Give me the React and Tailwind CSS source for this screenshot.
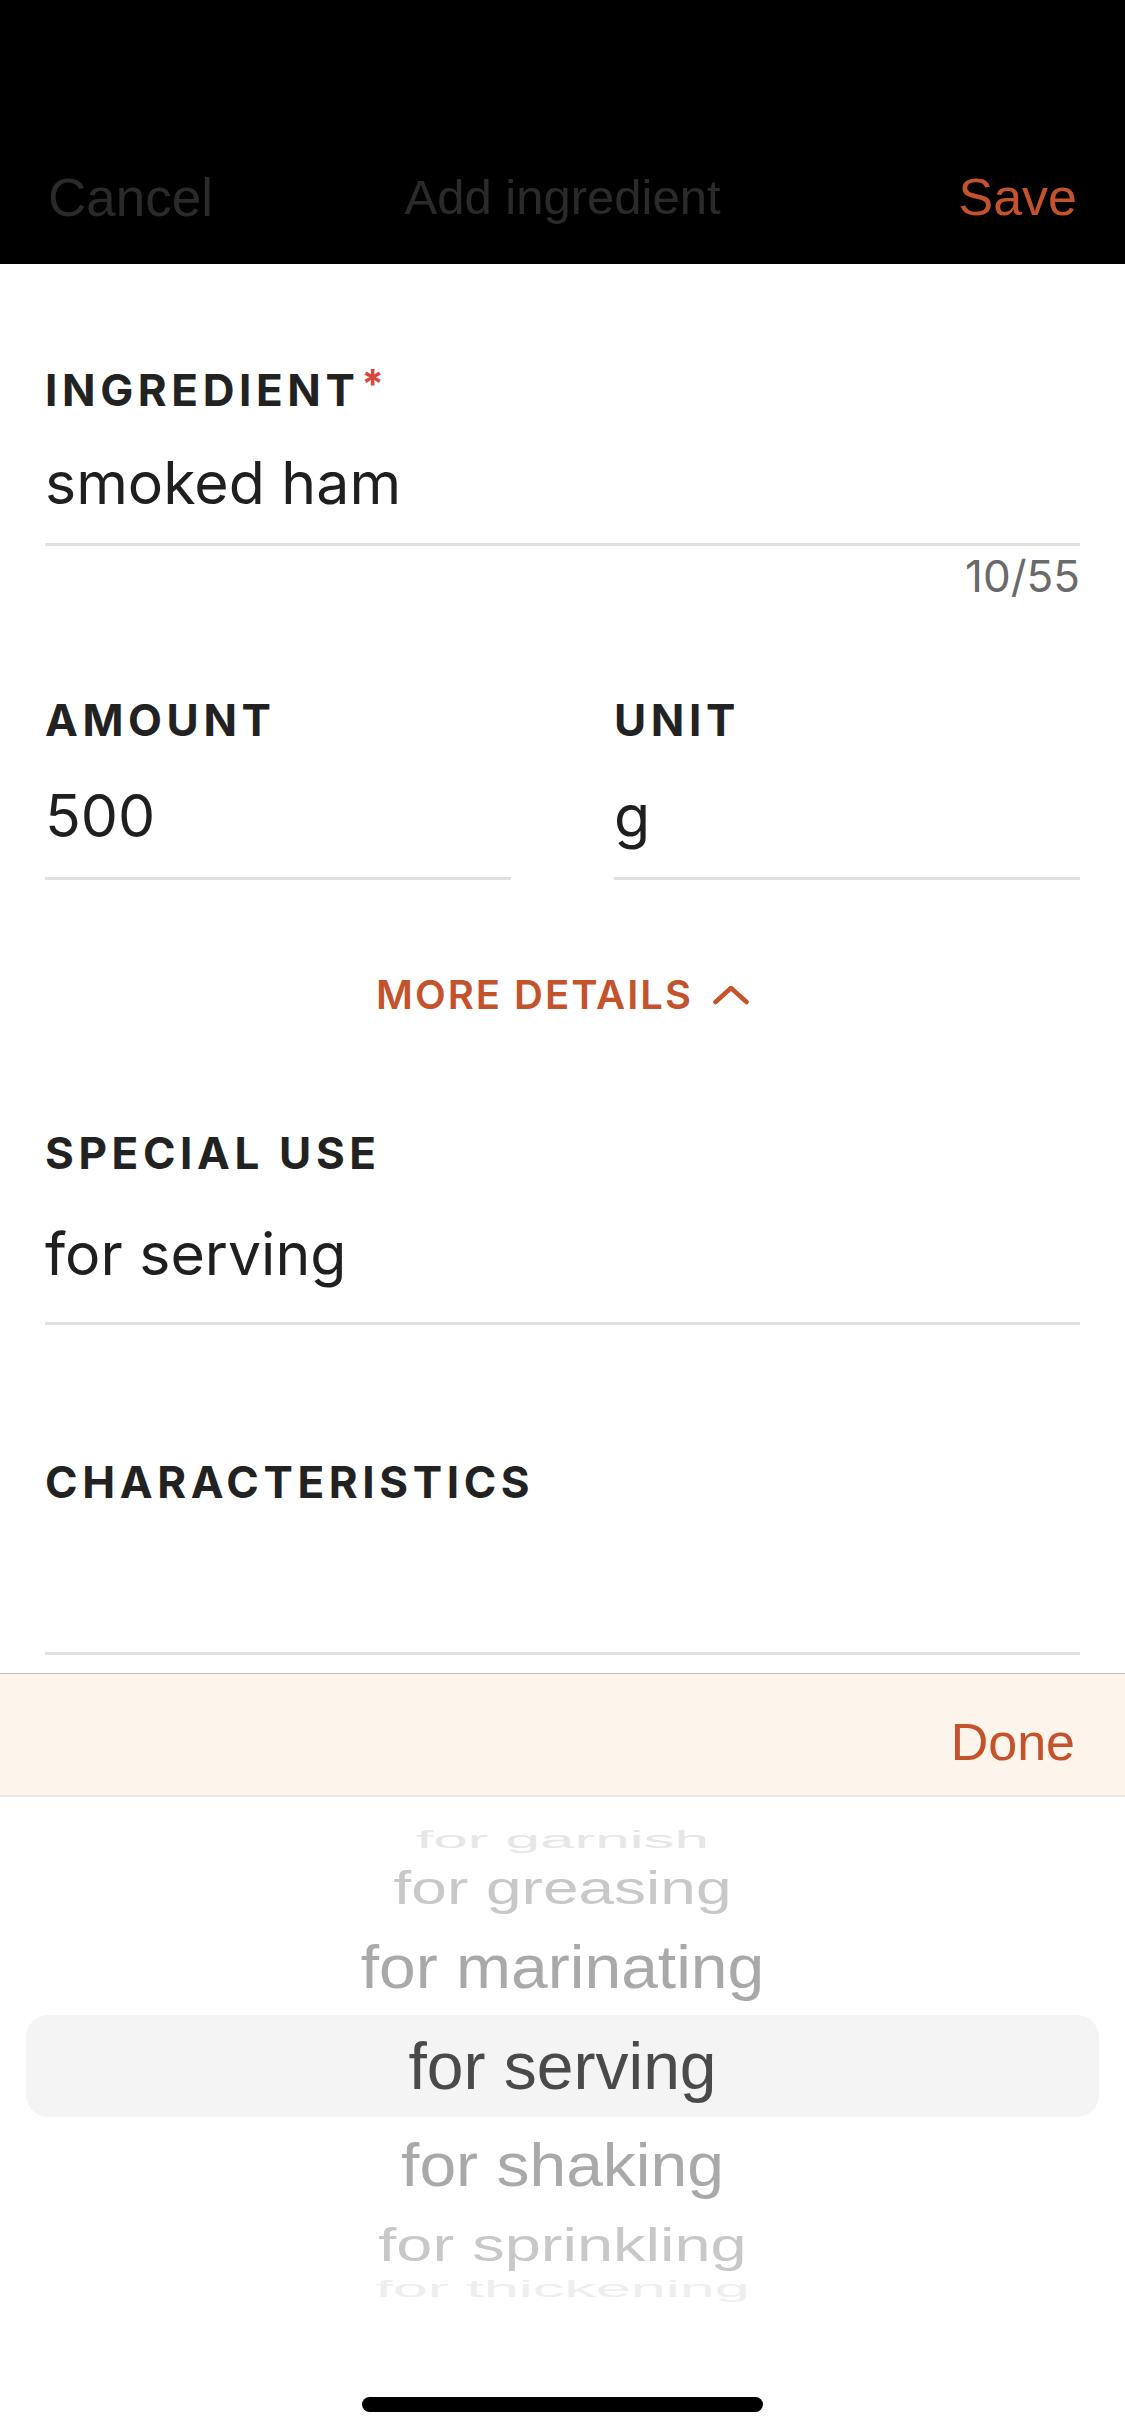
const sans = "font-['Inter',sans-serif]";
const ios = "font-['Liberation_Sans',Arial,sans-serif]";

function Label({ children, className = "" }) {
  return (
    <div
      className={`${sans} text-[44px] leading-none font-bold tracking-[0.105em] text-[#222222] ${className}`}>
      {children}
    </div>
  );
}

function Value({ children, className = "" }) {
  return (
    <div
      className={`${sans} text-[59px] leading-none text-[#1f1f1f] h-[60px] ${className}`}>
      {children}
    </div>
  );
}

function Line({ className = "" }) {
  return <div className={`h-[3px] bg-[#e0e0dd] ${className}`} />;
}

const wheel = [
  { text: "for garnish", h: "h-[34px]", cls: "text-[62px] text-[#e6e6e6] scale-y-[0.4]" },
  { text: "for greasing", h: "h-[62px]", cls: "text-[64px] text-[#c8c8c8] scale-y-[0.72]" },
  { text: "for marinating", h: "h-[96px]", cls: "text-[66px] text-[#a9a9a9] scale-y-[0.92]" },
  { text: "for serving", h: "h-[102px]", cls: "text-[66px] text-[#4a4a4a]", active: true },
  { text: "for shaking", h: "h-[96px]", cls: "text-[66px] text-[#a9a9a9] scale-y-[0.92]" },
  { text: "for sprinkling", h: "h-[62px]", cls: "text-[65px] text-[#c8c8c8] scale-y-[0.72]" },
  { text: "for thickening", h: "h-[26px]", cls: "text-[63px] text-[#eeeeee] scale-y-[0.38]" },
];

export default function App() {
  return (
    <div className="w-[1125px] h-[2436px] bg-white flex flex-col overflow-hidden">
      {/* Nav bar */}
      <header
        className={`${ios} h-[264px] shrink-0 bg-black grid grid-cols-[1fr_auto_1fr] items-start pt-[171px] px-[48px]`}>
        <span className="text-[53px] leading-none text-[#2a2a2a]">Cancel</span>
        <span className="text-[49px] leading-none text-[#2a2a2a] mt-[2px]">
          Add ingredient
        </span>
        <span className="text-[52px] leading-none text-[#c4522b] justify-self-end">
          Save
        </span>
      </header>

      {/* Form */}
      <div className="h-[1409px] shrink-0 overflow-hidden px-[45px] flex flex-col">
        <Label className="mt-[104px] flex">
          INGREDIENT
          <span className="text-[#d9473c] text-[40px] ml-[2px] -mt-[4px]">*</span>
        </Label>
        <Value className="mt-[41px]">smoked ham</Value>
        <Line className="mt-[30px]" />
        <div
          className={`${sans} mt-[8px] text-[44px] leading-none text-[#6a6a6a] text-right`}>
          10/55
        </div>

        <div className="mt-[100px] grid grid-cols-2 gap-x-[103px]">
          <div className="flex flex-col">
            <Label>AMOUNT</Label>
            <Value className="mt-[44px]">500</Value>
            <Line className="mt-[31px]" />
          </div>
          <div className="flex flex-col">
            <Label>UNIT</Label>
            <Value className="mt-[44px]">g</Value>
            <Line className="mt-[31px]" />
          </div>
        </div>

        <div
          className={`${sans} mt-[95px] h-[40px] flex items-center justify-center gap-[20px] text-[40px] leading-none font-semibold tracking-[0.05em] text-[#c4522b]`}>
          MORE DETAILS
          <svg
            width="36"
            height="20"
            viewBox="0 0 36 20"
            fill="none"
            stroke="currentColor"
            strokeWidth="4.5"
            strokeLinecap="round"
            strokeLinejoin="round">
            <polyline points="2.5,17 18,3 33.5,17" />
          </svg>
        </div>

        <Label className="mt-[116px]">SPECIAL USE</Label>
        <Value className="mt-[49px]">for serving</Value>
        <Line className="mt-[38px]" />

        <Label className="mt-[135px]">CHARACTERISTICS</Label>
        <Line className="mt-[148px]" />
      </div>

      {/* Keyboard toolbar */}
      <div className="h-[124px] shrink-0 border-t border-[#bcbcbc] border-b-2 border-b-[#e8e8e6] bg-[#fdf5ec] flex justify-end items-start pt-[42px] pr-[50px]">
        <span className={`${ios} text-[52px] leading-none text-[#c4522b]`}>Done</span>
      </div>

      {/* Picker wheel */}
      <div className={`${ios} flex-1 flex flex-col pt-[26px] overflow-hidden`}>
        {wheel.map((item) =>
          item.active ? (
            <div
              key={item.text}
              className={`${item.h} mx-[26px] rounded-[22px] bg-[#f4f4f4] flex items-center justify-center`}>
              <span className={`leading-none ${item.cls}`}>{item.text}</span>
            </div>
          ) : (
            <div
              key={item.text}
              className={`${item.h} flex items-center justify-center overflow-visible`}>
              <span className={`leading-none ${item.cls}`}>{item.text}</span>
            </div>
          )
        )}
        <div className="flex-1" />
        <div className="flex justify-center pb-[24px]">
          <div className="w-[401px] h-[15px] rounded-full bg-black" />
        </div>
      </div>
    </div>
  );
}
